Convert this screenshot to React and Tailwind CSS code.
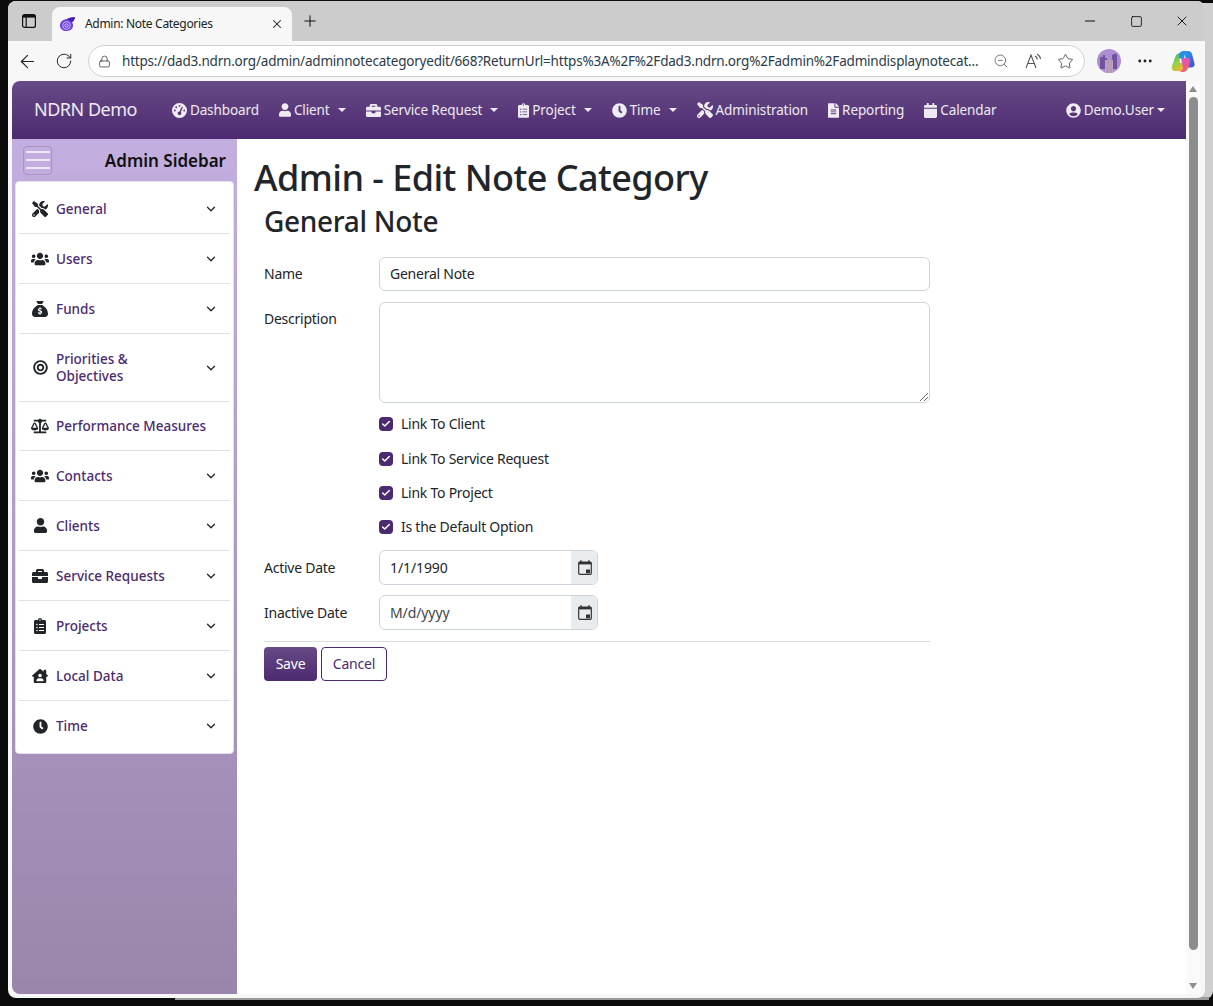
import React from "react";
import { ArrowLeft, RotateCw, Lock, ZoomOut, Star, Plus, X, Minus, Square, MoreHorizontal, ChevronDown, Check } from "lucide-react";
import { FaTools, FaUsers, FaBullseye, FaBalanceScale, FaUser, FaBriefcase, FaClipboardList, FaHouseUser, FaClock, FaFileAlt, FaCalendar, FaUserCircle } from "react-icons/fa";
import { FaSackDollar, FaGaugeHigh } from "react-icons/fa6";

const font = { fontFamily: '"Noto Sans", sans-serif' };

function NavItem({ icon, label, caret }) {
  return (
    <div className="flex items-center text-[13.5px] text-white/90 whitespace-nowrap tracking-[-0.1px]">
      <span className="flex items-center justify-center mr-[3px]">{icon}</span>
      <span>{label}</span>
      {caret && <span className="ml-[8px] w-0 h-0 border-x-[4px] border-x-transparent border-t-[4px] border-t-white/90" />}
    </div>
  );
}

function SideRow({ icon, label, chevron = true, h = "h-[50px]", last, extra = "" }) {
  return (
    <div className={`${h} ${extra} mx-[3px] flex items-center pl-[12px] pr-[12px] ${last ? "" : "border-b border-[#dee2e6]"}`}>
      <span className="w-[18px] flex justify-center text-[#212529] shrink-0">{icon}</span>
      <span className="ml-[7px] flex-1 text-[13.5px] leading-[17px] font-medium text-[#4c2a70] pt-[1px]">{label}</span>
      {chevron && <ChevronDown size={14} strokeWidth={2.2} className="text-[#212529] shrink-0" />}
    </div>
  );
}

function Check1({ label, extra = "" }) {
  return (
    <div className={`flex items-center h-[20px] ${extra}`}>
      <span className="w-[14px] h-[14px] rounded-[4px] bg-[#4c2a70] flex items-center justify-center">
        <Check size={10} strokeWidth={3.5} className="text-white" />
      </span>
      <span className="ml-[8px] text-[14px] text-[#212529] tracking-[-0.25px] pb-[1px]">{label}</span>
    </div>
  );
}

function CalIcon() {
  return (
    <svg width="14" height="15" viewBox="0 0 14 15" fill="none" className="text-[#333] ml-[1px]">
      <path d="M3 0.3v2.5M11 0.3v2.5" stroke="currentColor" strokeWidth="1.4" />
      <rect x="0.7" y="2" width="12.6" height="12.3" rx="1" stroke="currentColor" strokeWidth="1.2" />
      <rect x="1" y="2" width="12" height="2.4" fill="currentColor" />
      <rect x="8" y="9.500" width="4" height="3.800" fill="currentColor" />
    </svg>
  );
}

function DateField({ value, muted }) {
  return (
    <div className="flex h-[35px] w-[219px] border border-[#ced4da] rounded-[6px] overflow-hidden">
      <div className={`flex-1 flex items-center pl-[10px] pb-[1px] text-[14px] tracking-[-0.1px] ${muted ? "text-[#3f454b]" : "text-[#212529]"}`}>{value}</div>
      <div className="w-[26px] bg-[#e9ecef] flex items-center justify-center"><CalIcon /></div>
    </div>
  );
}

export default function App() {
  return (
    <div style={font} className="w-[1213px] h-[1006px] bg-[#0b0b0b] overflow-hidden relative">
      <div className="absolute right-0 top-[3px] bottom-[7px] w-[30px] bg-[#cfcfcf] rounded-br-[8px]" />
      <div className="absolute left-[175px] right-[4px] bottom-[6px] h-[3px] bg-[#9a9a9a]" />
      <div className="relative ml-[8px] mt-[1px] w-[1197px] h-[997px] rounded-[8px] bg-[#f7f7f7] overflow-hidden flex flex-col">
        {/* tab strip */}
        <div className="h-[40px] bg-[#cccccc] flex items-end shrink-0 relative">
          <div className="w-[44px] h-[40px] flex items-center justify-center">
            <svg width="14" height="14" viewBox="0 0 14 14" fill="none" className="ml-[-3px]">
              <rect x="0.6" y="0.6" width="12.8" height="12.8" rx="2" stroke="#111" strokeWidth="1.2" />
              <rect x="1" y="1" width="12" height="2.6" fill="#111" />
              <path d="M4.2 3v10" stroke="#111" strokeWidth="1.2" />
            </svg>
          </div>
          <div className="w-[240px] h-[34px] bg-[#f7f7f7] rounded-t-[8px] flex items-center pl-[7px] pr-[8px]">
            <svg width="17" height="16" viewBox="0 0 17 16" className="shrink-0">
              <path d="M1 9.500C1 5.500 4.500 3 8 3.200 10.500 1.800 13.500 1 16 1.500 15.500 3.500 14.500 5 13 6 14 7.500 14.200 9 14 10.500 13.200 13.500 10.500 15 7.500 15 4 15 1 13 1 9.500Z" fill="#6d3fe0" />
              <path d="M8 3.200C10.500 1.800 13.500 1 16 1.500 15.500 3.500 14.500 5 13 6 11.500 4.500 10 3.600 8 3.200Z" fill="#3f1fa8" />
              <circle cx="7.500" cy="9.500" r="3.800" fill="none" stroke="#d9c8ff" strokeWidth="0.9" />
              <circle cx="7.500" cy="9.500" r="1.600" fill="none" stroke="#efe6ff" strokeWidth="0.9" />
            </svg>
            <span className="ml-[9px] text-[12px] text-[#222] flex-1 tracking-[-0.3px]">Admin: Note Categories</span>
            <X size={14} strokeWidth={1.8} className="text-[#222]" />
          </div>
          <div className="h-[40px] flex items-center ml-[9px]"><Plus size={18} strokeWidth={1.4} className="text-[#111]" /></div>
          <div className="ml-auto h-[40px] flex items-center pr-[15px] gap-[31.5px] text-[#111]">
            <Minus size={16} strokeWidth={1.5} />
            <Square size={13} strokeWidth={1.6} />
            <X size={16} strokeWidth={1.4} />
          </div>
        </div>
        {/* address bar */}
        <div className="h-[40px] shrink-0 flex items-center relative">
          <ArrowLeft size={21} strokeWidth={1.3} className="ml-[9px] text-[#222]" />
          <RotateCw size={18} strokeWidth={1.3} className="ml-[17px] text-[#222]" />
          <div className="ml-[15px] w-[997px] h-[32px] bg-white border border-[#d0d0d0] rounded-full flex items-center pl-[9px] pr-[10px]">
            <Lock size={13} strokeWidth={1.4} className="text-[#333] shrink-0" />
            <span className="ml-[11px] text-[13.5px] text-[#2a3a4a] whitespace-nowrap w-[859px] tracking-[-0.2px]">https://dad3.ndrn.org/admin/adminnotecategoryedit/668?ReturnUrl=https%3A%2F%2Fdad3.ndrn.org%2Fadmin%2Fadmindisplaynotecat...</span>
            <ZoomOut size={16} strokeWidth={1.2} className="ml-[15px] text-[#555] shrink-0" />
            <svg width="18" height="16" viewBox="0 0 18 16" fill="none" className="ml-[16px] shrink-0" stroke="#555" strokeWidth="1.1">
              <path d="M1 15 L6 2 L11 15 M2.800 10.500h6.400" />
              <path d="M10 3 q2 1 2.400 3.400 M12 1 q3 1.600 3.600 5" />
            </svg>
            <Star size={17} strokeWidth={1.2} className="ml-[14px] text-[#444] shrink-0" />
          </div>
          <svg width="24" height="24" viewBox="0 0 24 24" className="ml-[12px] shrink-0">
            <circle cx="12" cy="12" r="12" fill="#ac8fd0" />
            <path d="M3 20V8h3v-2h2v3h2v11zM15 20V6l3-1.500 2 1V20z" fill="#6f539f" />
            <rect x="8" y="11" width="8" height="13" fill="#bfa3bf" />
            <path d="M10 11v13M12 11v13M14 11v13" stroke="#a98aae" strokeWidth="0.6" />
          </svg>
          <MoreHorizontal size={18} strokeWidth={1.8} className="ml-[15px] text-[#222]" />
          <svg width="24" height="23" viewBox="0 0 24 23" className="ml-[17px] shrink-0">
            <defs>
              <linearGradient id="cp1" x1="0" y1="0" x2="1" y2="1"><stop offset="0" stopColor="#1fa7e8" /><stop offset="1" stopColor="#4a45d8" /></linearGradient>
              <linearGradient id="cp2" x1="0" y1="0" x2="0.600" y2="1"><stop offset="0" stopColor="#25b08a" /><stop offset="0.5" stopColor="#8fd04a" /><stop offset="1" stopColor="#f4b72e" /></linearGradient>
              <linearGradient id="cp3" x1="0" y1="0" x2="1" y2="1"><stop offset="0" stopColor="#c860e0" /><stop offset="0.6" stopColor="#f0568c" /><stop offset="1" stopColor="#f58a3a" /></linearGradient>
            </defs>
            <path d="M13 1h4c2 0 3.400 1.200 4 3l2.400 9c.7 3-1 4.500-3.400 4.500h-3z" fill="url(#cp1)" />
            <path d="M8 3.500C6 3.500 5 5 4.500 6.500L1 16c-.8 3 .8 5 3.500 5H10c2 0 3.500-1 4-3l1-5H9z" fill="url(#cp2)" />
            <path d="M10 8h7c2 0 2.500 1.500 2 3l-1.500 6c-.7 2.500-2.500 5-5.500 5H7.500c2.500 0 4-1.500 4.500-4z" fill="url(#cp3)" />
            <path d="M8 3.500C10 1.500 11 1 13 1h4c-1.500 0-2.500 1-3 3l-1 4.500H8z" fill="#2a8fe6" />
          </svg>
        </div>
        {/* page */}
        <div className="flex-1 flex min-h-0 pl-[4px] pr-[5px] pb-[4px]">
          <div className="flex-1 bg-white rounded-tl-[8px] rounded-bl-[8px] overflow-hidden flex flex-col min-w-0">
            <div className="h-[58px] shrink-0 bg-gradient-to-b from-[#674a86] to-[#4c2a70] flex items-center pl-[22px] pr-[21px]">
              <span className="text-[18px] text-white/90 mr-[35px] tracking-[-0.5px] pb-[1px]">NDRN Demo</span>
              <div className="flex items-center gap-[20px] flex-1">
                <NavItem label="Dashboard" icon={<FaGaugeHigh size={15} />} />
                <NavItem label="Client" caret icon={<FaUser size={14} className="w-[12px]" />} />
                <NavItem label="Service Request" caret icon={<FaBriefcase size={15} />} />
                <NavItem label="Project" caret icon={<FaClipboardList size={15} className="w-[11px]" />} />
                <NavItem label="Time" caret icon={<FaClock size={15} />} />
                <NavItem label="Administration" icon={<FaTools size={16} />} />
                <NavItem label="Reporting" icon={<FaFileAlt size={15} className="w-[11px]" />} />
                <NavItem label="Calendar" icon={<FaCalendar size={15} className="w-[13px]" />} />
                <div className="ml-auto flex items-center text-[13.5px] text-white/90 tracking-[-0.1px]">
                  <FaUserCircle size={15} className="mr-[3px]" />
                  <span>Demo.User</span>
                  <span className="ml-[3px] w-0 h-0 border-x-[4px] border-x-transparent border-t-[4px] border-t-white/90" />
                </div>
              </div>
            </div>
            <div className="flex-1 flex min-h-0">
              <aside className="w-[225px] shrink-0 bg-gradient-to-b from-[#c3aee0] to-[#9a86aa] flex flex-col">
                <div className="h-[42px] flex items-center pl-[11px] pr-[11px] shrink-0">
                  <div className="w-[29px] h-[29px] rounded-[4px] border border-[#a793c4] flex flex-col items-center justify-center gap-[6px]">
                    <span className="w-[24px] h-[2px] bg-white/70" />
                    <span className="w-[24px] h-[2px] bg-white/70" />
                    <span className="w-[24px] h-[2px] bg-white/70" />
                  </div>
                  <span className="ml-auto text-[17px] font-semibold text-[#111] pt-[2px]">Admin Sidebar</span>
                </div>
                <div className="mx-[3px] h-[573px] bg-white rounded-[4px] border border-[#e4e0ee] flex flex-col pt-[1px]">
                  <SideRow icon={<FaTools size={16} />} label="General" h="h-[51px]" extra="pt-[2px]" />
                  <SideRow icon={<FaUsers size={18} />} label="Users" />
                  <SideRow icon={<FaSackDollar size={16} />} label="Funds" />
                  <SideRow icon={<FaBullseye size={15} />} label={<>Priorities &<br />Objectives</>} h="h-[68px]" />
                  <SideRow icon={<FaBalanceScale size={18} />} label="Performance Measures" chevron={false} h="h-[49px]" />
                  <SideRow icon={<FaUsers size={18} />} label="Contacts" />
                  <SideRow icon={<FaUser size={15} />} label="Clients" />
                  <SideRow icon={<FaBriefcase size={16} />} label="Service Requests" />
                  <SideRow icon={<FaClipboardList size={16} />} label="Projects" />
                  <SideRow icon={<FaHouseUser size={16} />} label="Local Data" />
                  <SideRow icon={<FaClock size={15} />} label="Time" last />
                </div>
              </aside>
              <main className="flex-1 pl-[17px] pt-[17px] text-[#212529] min-w-0">
                <h1 className="text-[36px] leading-[44px] font-medium tracking-[-0.55px]">Admin - Edit Note Category</h1>
                <div className="ml-[10px] w-[666px]">
                  <h2 className="text-[28px] leading-[42px] font-medium tracking-[-0.3px]">General Note</h2>
                  <div className="mt-[15px] flex">
                    <label className="w-[115px] text-[14px] leading-[34px] tracking-[-0.25px]">Name</label>
                    <div className="flex-1 h-[34px] border border-[#ced4da] rounded-[6px] flex items-center pl-[10px] pb-[1px] text-[14px] tracking-[-0.25px]">General Note</div>
                  </div>
                  <div className="mt-[11px] flex">
                    <label className="w-[115px] text-[14px] leading-[34px] tracking-[-0.25px]">Description</label>
                    <div className="relative flex-1 h-[101px] border border-[#ced4da] rounded-[6px]">
                      <svg width="8" height="8" viewBox="0 0 8 8" className="absolute right-[1px] bottom-[1px]" stroke="#666" strokeWidth="1"><path d="M0 8L8 0M4 8L8 4" /></svg>
                    </div>
                  </div>
                  <div className="ml-[115px] mt-[11px] flex flex-col">
                    <Check1 label="Link To Client" />
                    <Check1 label="Link To Service Request" extra="mt-[15px]" />
                    <Check1 label="Link To Project" extra="mt-[14px]" />
                    <Check1 label="Is the Default Option" extra="mt-[14px]" />
                  </div>
                  <div className="mt-[13px] flex items-center">
                    <label className="w-[115px] text-[14px] tracking-[-0.25px]">Active Date</label>
                    <DateField value="1/1/1990" />
                  </div>
                  <div className="mt-[10px] flex items-center">
                    <label className="w-[115px] text-[14px] tracking-[-0.25px]">Inactive Date</label>
                    <DateField value="M/d/yyyy" muted />
                  </div>
                  <div className="mt-[11px] border-t border-[#dcdcdc]" />
                  <div className="mt-[5px] flex gap-[4px]">
                    <button className="w-[53px] h-[34px] rounded-[4px] bg-gradient-to-b from-[#674a86] to-[#4c2a70] text-white text-[14px] tracking-[-0.2px] pb-[2px]">Save</button>
                    <button className="w-[66px] h-[34px] rounded-[4px] border border-[#4c2a70] bg-white text-[#4c2a70] text-[14px] tracking-[-0.2px] pb-[2px]">Cancel</button>
                  </div>
                </div>
              </main>
            </div>
          </div>
          <div className="w-[14px] bg-[#fafafa] flex flex-col items-center shrink-0 pt-[4px] pb-[5px]">
            <span className="w-0 h-0 border-x-[4px] border-x-transparent border-b-[6px] border-b-[#8d8d8d] mt-[1px]" />
            <span className="mt-[5px] w-[9px] h-[853px] rounded-full bg-[#8d8d8d] ml-[1px]" />
            <span className="mt-auto w-0 h-0 border-x-[4px] border-x-transparent border-t-[6px] border-t-[#8d8d8d]" />
          </div>
        </div>
      </div>
    </div>
  );
}
